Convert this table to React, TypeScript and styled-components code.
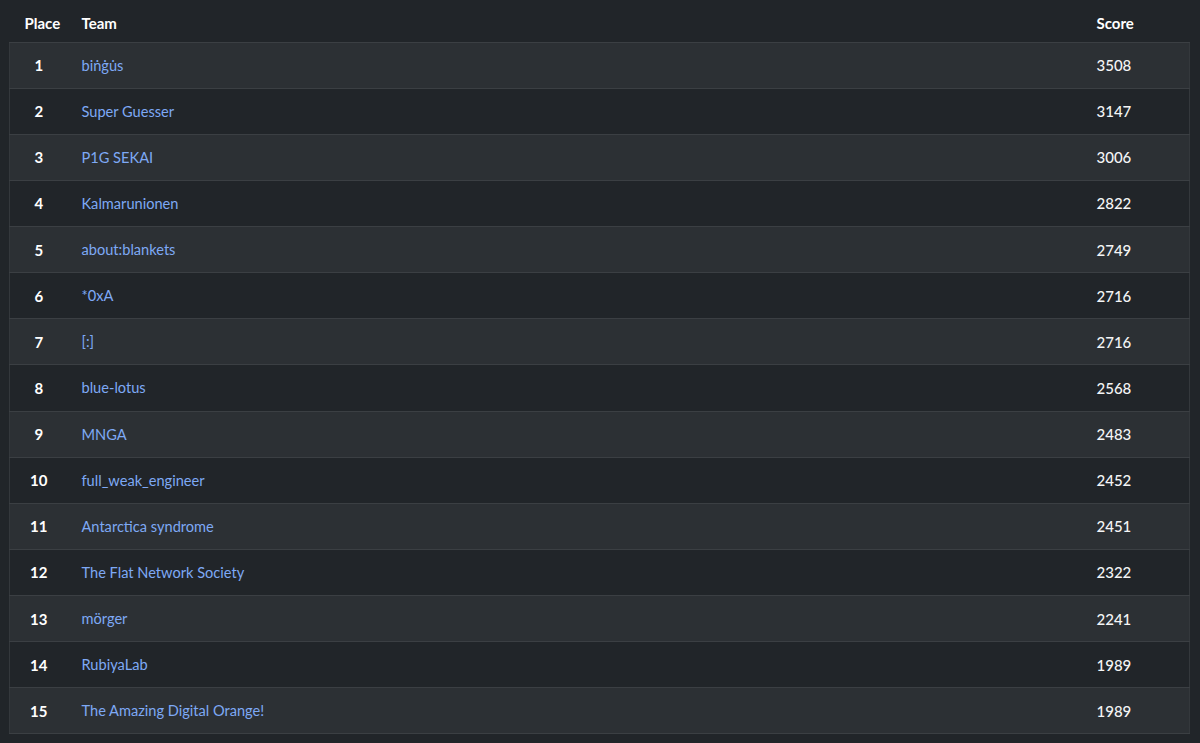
import React from "react";
import styled, { createGlobalStyle } from "styled-components";

const GlobalStyle = createGlobalStyle`
  html, body {
    margin: 0;
    padding: 0;
    background: #212529;
    font-family: Lato, "Open Sans", "Liberation Sans", sans-serif;
  }
`;

interface Team {
  place: number;
  name: string;
  score: number;
}

const teams: Team[] = [
  { place: 1, name: "bin\u0307g\u0307u\u0307s", score: 3508 },
  { place: 2, name: "Super Guesser", score: 3147 },
  { place: 3, name: "P1G SEKAI", score: 3006 },
  { place: 4, name: "Kalmarunionen", score: 2822 },
  { place: 5, name: "about:blankets", score: 2749 },
  { place: 6, name: "*0xA", score: 2716 },
  { place: 7, name: "[:]", score: 2716 },
  { place: 8, name: "blue-lotus", score: 2568 },
  { place: 9, name: "MNGA", score: 2483 },
  { place: 10, name: "full_weak_engineer", score: 2452 },
  { place: 11, name: "Antarctica syndrome", score: 2451 },
  { place: 12, name: "The Flat Network Society", score: 2322 },
  { place: 13, name: "mörger", score: 2241 },
  { place: 14, name: "RubiyaLab", score: 1989 },
  { place: 15, name: "The Amazing Digital Orange!", score: 1989 },
];

const Page = styled.div`
  padding: 0 10px 0 9px;
  min-height: 743px;
  box-sizing: border-box;
`;

const Table = styled.table`
  width: 100%;
  table-layout: fixed;
  border-collapse: collapse;
  color: #f4f5f6;
  font-size: 14.6px;
`;

const PlaceCol = styled.col`
  width: 58px;
`;

const ScoreCol = styled.col`
  width: 108px;
`;

const HeadCell = styled.th<{ $indent?: number }>`
  height: 42px;
  padding: 4px 0 0 ${(p) => p.$indent ?? 15}px;
  box-sizing: border-box;
  text-align: left;
  font-weight: 700;
  font-size: 15px;
  color: #ffffff;
  border-bottom: 1px solid #3b3f43;
  vertical-align: middle;
`;

const Row = styled.tr<{ $striped: boolean }>`
  background: ${(p) => (p.$striped ? "#2c3034" : "#212529")};
  border-bottom: 1px solid #3b3f43;
  border-left: 1px solid #34383c;
  border-right: 1px solid #34383c;
`;

const PlaceCell = styled.td`
  height: 45.14px;
  padding: 0;
  text-align: center;
  font-weight: 700;
  font-size: 15px;
  color: #ffffff;
`;

const TeamCell = styled.td`
  padding: 0 0 0 14px;
`;

const ScoreCell = styled.td`
  padding: 0 0 0 15px;
  color: #f4f5f6;
  font-size: 15px;
  font-weight: 500;
`;

const TeamLink = styled.a`
  color: #7ea9f5;
  text-decoration: none;
`;

const App: React.FC = () => {
  return (
    <Page>
      <GlobalStyle />
      <Table>
        <colgroup>
          <PlaceCol />
          <col />
          <ScoreCol />
        </colgroup>
        <thead>
          <tr>
            <HeadCell>Place</HeadCell>
            <HeadCell $indent={14}>Team</HeadCell>
            <HeadCell>Score</HeadCell>
          </tr>
        </thead>
        <tbody>
          {teams.map((t) => (
            <Row key={t.place} $striped={t.place % 2 === 1}>
              <PlaceCell>{t.place}</PlaceCell>
              <TeamCell>
                <TeamLink href="#">{t.name}</TeamLink>
              </TeamCell>
              <ScoreCell>{t.score}</ScoreCell>
            </Row>
          ))}
        </tbody>
      </Table>
    </Page>
  );
};

export default App;
